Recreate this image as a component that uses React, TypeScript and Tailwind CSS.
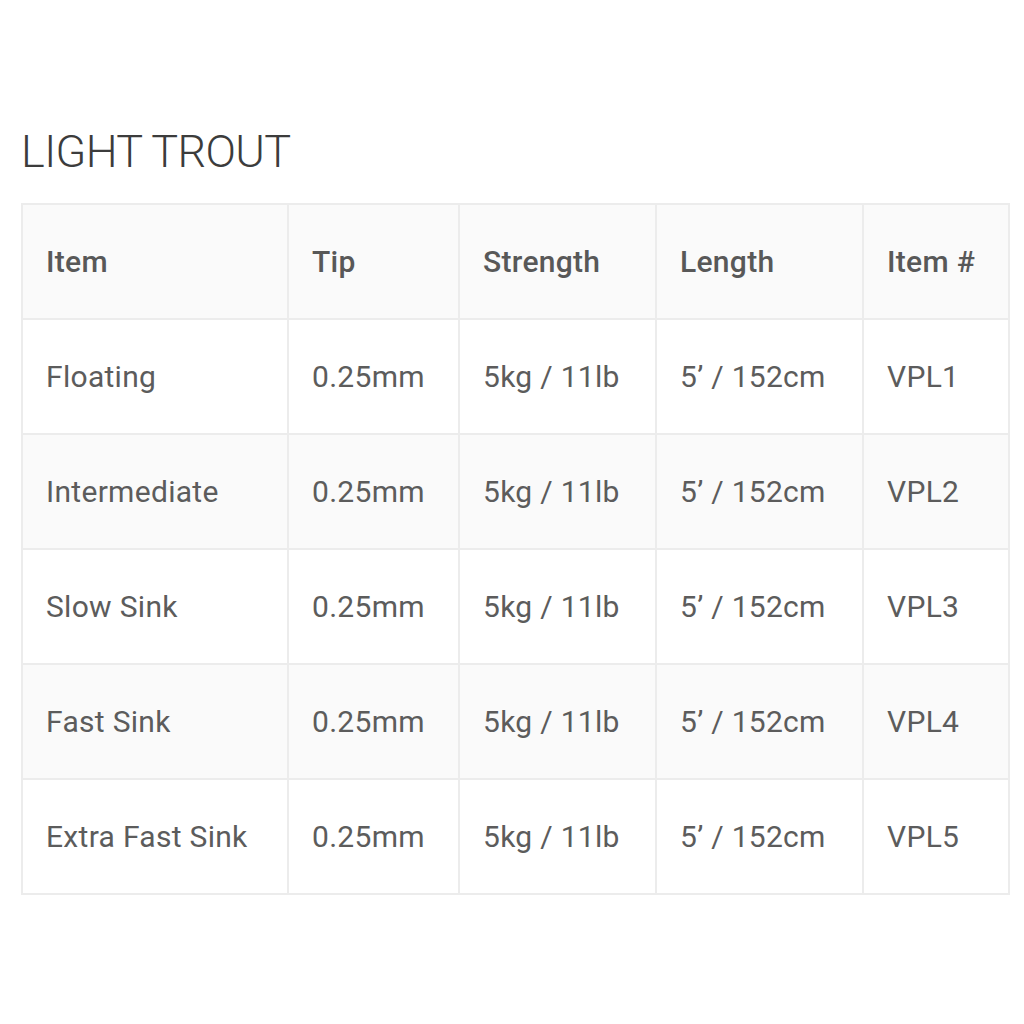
import React from 'react';

const rows = [
  ['Floating', '0.25mm', '5kg / 11lb', '5’ / 152cm', 'VPL1'],
  ['Intermediate', '0.25mm', '5kg / 11lb', '5’ / 152cm', 'VPL2'],
  ['Slow Sink', '0.25mm', '5kg / 11lb', '5’ / 152cm', 'VPL3'],
  ['Fast Sink', '0.25mm', '5kg / 11lb', '5’ / 152cm', 'VPL4'],
  ['Extra Fast Sink', '0.25mm', '5kg / 11lb', '5’ / 152cm', 'VPL5'],
];

const headers = ['Item', 'Tip', 'Strength', 'Length', 'Item #'];
const widths = ['w-[266px]', 'w-[171px]', 'w-[197px]', 'w-[207px]', 'w-[146px]'];

export default function App() {
  return (
    <div className="min-h-screen bg-white pl-[21px] pr-[16px] pt-[122px] font-['Roboto',sans-serif]">
      <h1 className="text-[45px] leading-[60px] font-light text-[#3c3c3c] tracking-[-0.6px] mb-[21px]">
        LIGHT TROUT
      </h1>
      <table className="w-[987px] border-collapse table-fixed border-2 border-[#ececec]">
        <thead>
          <tr className="bg-[#fafafa] h-[115px]">
            {headers.map((h, i) => (
              <th
                key={h}
                className={`${widths[i]} border-2 border-[#ececec] text-left align-middle pl-[23px] text-[30px] tracking-[0.3px] font-medium text-[#585858]`}
              >
                {h}
              </th>
            ))}
          </tr>
        </thead>
        <tbody>
          {rows.map((r, ri) => (
            <tr key={ri} className={`h-[115px] ${ri % 2 === 1 ? 'bg-[#fafafa]' : 'bg-white'}`}>
              {r.map((c, ci) => (
                <td
                  key={ci}
                  className="border-2 border-[#ececec] align-middle pl-[23px] text-[30px] tracking-[0.3px] font-normal text-[#5c5c5c]"
                >
                  {c}
                </td>
              ))}
            </tr>
          ))}
        </tbody>
      </table>
    </div>
  );
}
